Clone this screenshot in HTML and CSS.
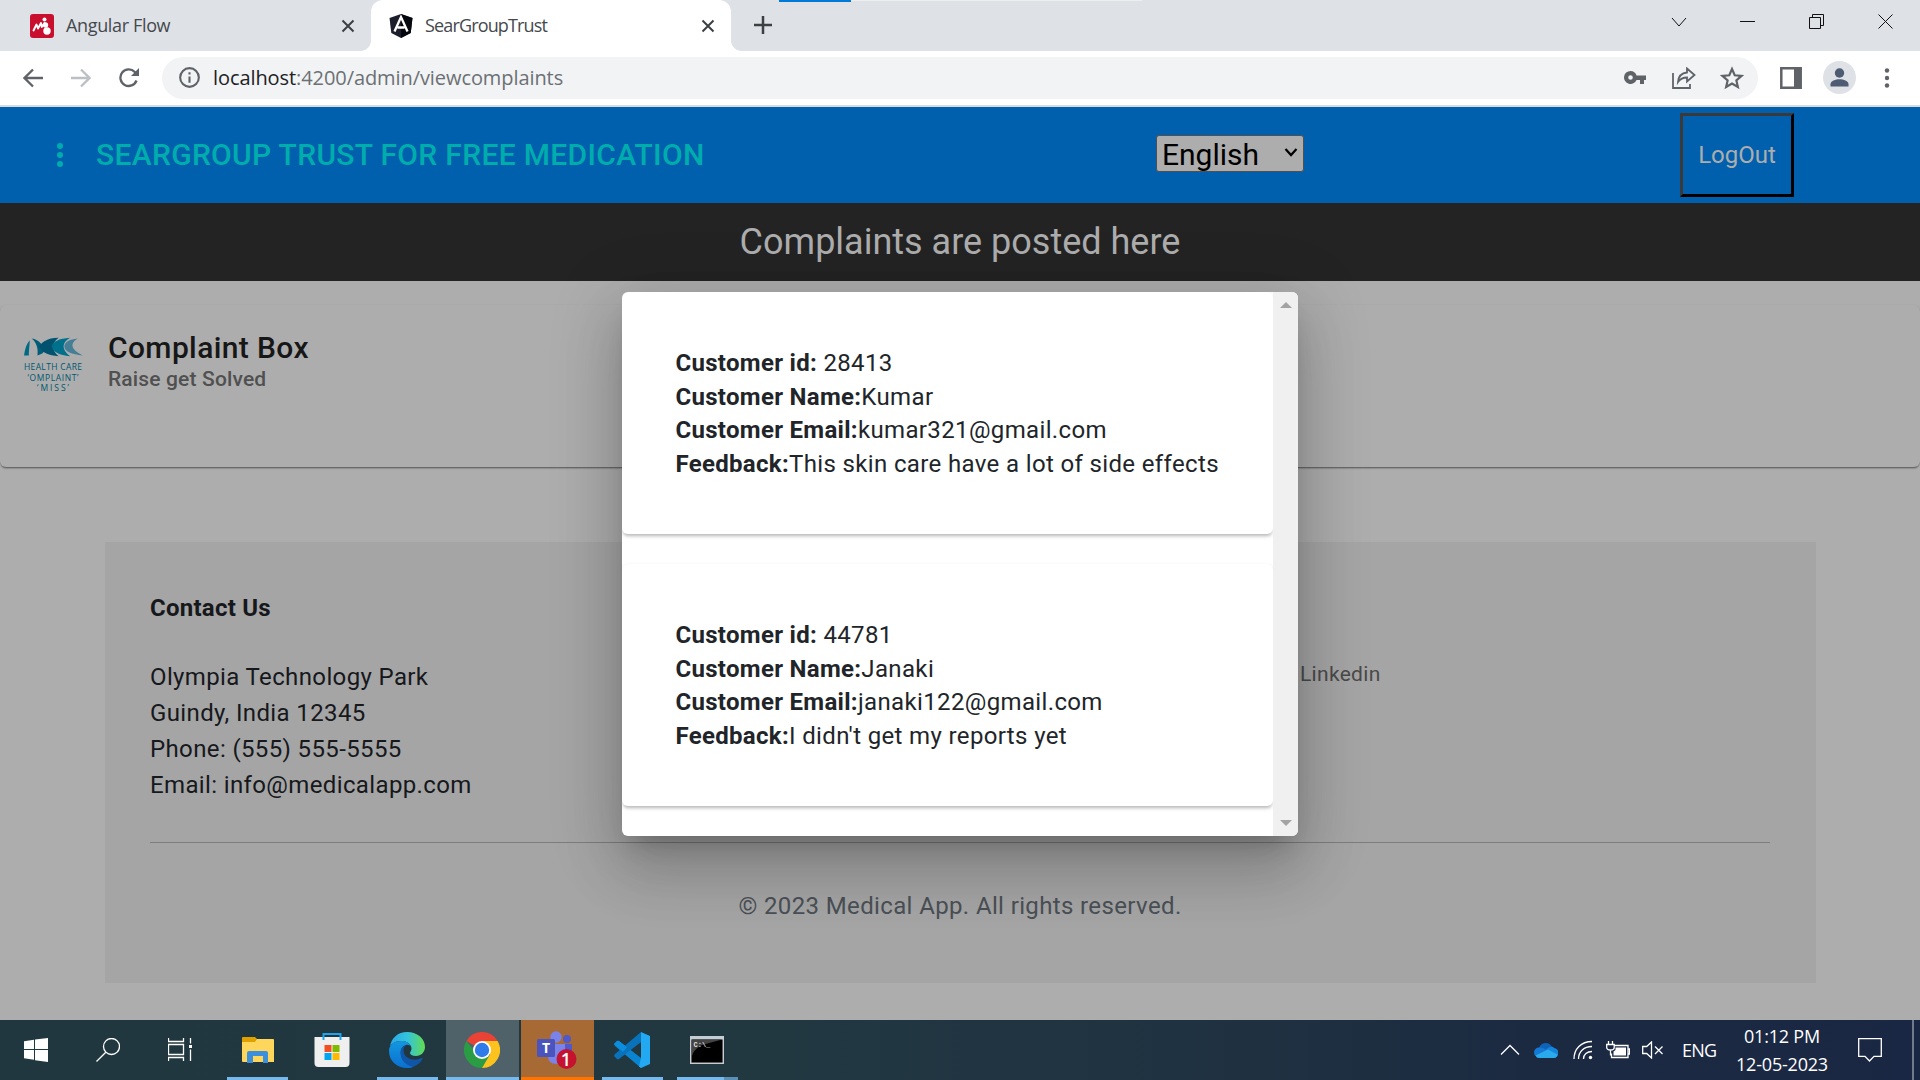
FILE: index.html
```html
<!DOCTYPE html>
<html lang="en">
<head>
<meta charset="utf-8">
<title>SearGroupTrust</title>
<link rel="stylesheet" href="styles.css">
</head>
<body>
<div class="tabs">
  <div class="tab">
    <svg class="fav" viewBox="0 0 24 24"><rect width="24" height="24" rx="3" fill="#c8102e"/><path d="M3.500 16.500l3-6 1.500 4 3-5.500.8 4 2.700-4" fill="none" stroke="#fff" stroke-width="1.900" stroke-linejoin="round" stroke-linecap="round"/><circle cx="14.500" cy="5.500" r="2" fill="#fff"/><circle cx="15.500" cy="11" r="2.700" fill="#fff"/><circle cx="17" cy="17" r="3.700" fill="#fff"/></svg>
    <span class="tab-name">Angular Flow</span>
    <svg class="x" viewBox="0 0 14 14"><path d="M1.500 1.500l11 11M12.500 1.500l-11 11"/></svg>
  </div>
  <div class="tab active">
    <svg class="fav" viewBox="0 0 24 24"><path d="M12 0l11.500 4-1.800 15L12 24l-9.700-5L.5 4z" fill="#1c1f2b"/><path d="M12 0l11.500 4-1.800 15L12 24z" fill="#05070f"/><path d="M5.500 17.500L12 3l6.500 14.500M8.500 13.500h7" fill="none" stroke="#fff" stroke-width="2.300"/></svg>
    <span class="tab-name">SearGroupTrust</span>
    <svg class="x" viewBox="0 0 14 14"><path d="M1.500 1.500l11 11M12.500 1.500l-11 11"/></svg>
  </div>
  <svg class="plus" viewBox="0 0 18 18"><path d="M9 0v18M0 9h18"/></svg>
  <div class="progress"><i></i></div>
  <div class="window-buttons">
    <svg viewBox="0 0 16 16"><path d="M1 4l7 8 7-8"/></svg>
    <svg viewBox="0 0 16 16"><path d="M0 7.500h15"/></svg>
    <svg viewBox="0 0 16 16"><path d="M.5 3.500h11v11H.5zM3.500 3.500v-3h11v11h-3"/></svg>
    <svg viewBox="0 0 16 16"><path d="M.5.5l14 14M14.500.5l-14 14"/></svg>
  </div>
</div>
<div class="toolbar">
  <svg class="nav-arrow" viewBox="0 0 20 20"><path d="M20 10H2M10 1.500L1.500 10l8.500 8.500"/></svg>
  <svg class="nav-arrow off" viewBox="0 0 20 20"><path d="M0 10h18M10 1.500l8.500 8.500-8.500 8.500"/></svg>
  <svg class="nav-arrow" viewBox="0 0 20 20"><path d="M17.500 12.500A8.300 8.300 0 1 1 15.800 4L18 6.500"/><path d="M20 0v8h-8z" class="solid"/></svg>
  <div class="omnibox">
    <svg class="info" viewBox="0 0 20 20"><circle cx="10" cy="10" r="8.900"/><path d="M10 9v6M10 5v2.200"/></svg>
    <span class="url"><b>localhost</b>:4200/admin/viewcomplaints</span>
    <svg class="key" viewBox="0 0 22 13"><path d="M6.500 0a6.500 6.500 0 1 0 6 9H16v4h4V9h2V4.500h-9.500A6.500 6.500 0 0 0 6.500 0zm0 4.200a2.300 2.300 0 1 1 0 4.600 2.300 2.300 0 0 1 0-4.600z" class="solid"/></svg>
    <svg class="share" viewBox="0 0 24 22"><path d="M1 6v15h17v-4M15 1.500l7.500 6.500-7.500 6.500v-4c-4 0-6.500 1-9 4.500.5-6 4-9 9-9.500z"/></svg>
    <svg class="star" viewBox="0 0 22 22"><path d="M11 2.800l2.500 5.700 6.200.6-4.700 4.100 1.400 6.100-5.400-3.200-5.400 3.200L7 13.200 2.300 9.100l6.200-.6z"/></svg>
  </div>
  <svg class="panel" viewBox="0 0 22 22"><path d="M1.300 1.300h19.400v19.400H1.300z"/><path d="M14 1h7v20h-7z" class="solid"/></svg>
  <svg class="avatar" viewBox="0 0 33 33"><circle cx="16.500" cy="16.500" r="16.500" fill="#dee1e6"/><circle cx="16.500" cy="12" r="4.700" fill="#4d5b73"/><path d="M7.500 25.500v-2.300c0-3.300 5-5 9-5s9 1.700 9 5v2.300z" fill="#4d5b73"/></svg>
  <svg class="dots" viewBox="0 0 6 20"><circle cx="3" cy="2.500" r="2.200"/><circle cx="3" cy="10" r="2.200"/><circle cx="3" cy="17.500" r="2.200"/></svg>
</div>

<div class="page">
  <header class="nav">
    <svg class="kebab" viewBox="0 0 6 24"><circle cx="3" cy="3" r="3"/><circle cx="3" cy="12" r="3"/><circle cx="3" cy="21" r="3"/></svg>
    <h1>SEARGROUP TRUST FOR FREE MEDICATION</h1>
    <div class="lang"><span>English</span><svg viewBox="0 0 14 9"><path d="M1.500 1l5.500 6L12.500 1"/></svg></div>
    <button class="logout">LogOut</button>
  </header>
  <div class="banner">Complaints are posted here</div>
  <section class="box">
    <svg class="logo" viewBox="0 0 60 52">
      <g transform="scale(.96 .8)">
        <path d="M0 23C1 14 3 8 6 4c0 6-1 12-1 19z" fill="#006a85"/>
        <path d="M8 2c8 1 12 10 15 14-3 4-5 6-9 7 1-9-1-16-6-21z" fill="#005d78"/>
        <path d="M36 1c-12 0-18 6-20 11 3 8 10 11 20 12-7-7-8-16 0-23z" fill="#00526f"/>
        <path d="M48 1c-12 1-18 5-19 11 1 7 8 11 19 12-9-8-9-17 0-23z" fill="#00718c"/>
        <path d="M56 2c-9 1-14 5-14 10 0 6 8 10 19 11-13-8-13-15-5-21z" fill="#467e96"/>
      </g>
      <text x="29" y="33" textLength="58">HEALTH CARE</text><text x="29" y="43.500" textLength="51">‘OMPLAINT’</text><text x="29" y="53.500" textLength="32">‘MISS’</text>
    </svg>
    <div><h2>Complaint Box</h2><p>Raise get Solved</p></div>
  </section>
  <footer class="foot">
    <div class="cols">
      <div class="contact">
        <h3>Contact Us</h3>
        <address>Olympia Technology Park<br>Guindy, India 12345<br>Phone: (555) 555-5555<br>Email: info@medicalapp.com</address>
      </div>
      <div class="social">Linkedin</div>
    </div>
    <p class="copy">© 2023 Medical App. All rights reserved.</p>
  </footer>
  <div class="dialog">
    <div class="list">
      <article class="item">
        <div><b>Customer id:</b> 28413</div>
        <div><b>Customer Name:</b>Kumar</div>
        <div><b>Customer Email:</b>kumar321@gmail.com</div>
        <div><b>Feedback:</b>This skin care have a lot of side effects</div>
      </article>
      <article class="item">
        <div><b>Customer id:</b> 44781</div>
        <div><b>Customer Name:</b>Janaki</div>
        <div><b>Customer Email:</b>janaki122@gmail.com</div>
        <div><b>Feedback:</b>I didn't get my reports yet</div>
      </article>
    </div>
    <div class="scroll">
      <svg viewBox="0 0 12 6"><path d="M0 6l6-6 6 6z"/></svg>
      <svg viewBox="0 0 12 6"><path d="M0 0l6 6 6-6z"/></svg>
    </div>
  </div>
</div>

<div class="taskbar">
  <div class="sys"><svg width="24" height="24" viewBox="0 0 24 24"><path d="M0 3.300L10 1.800V11H0zM11 1.600L24 0v11H11zM0 12h10v9.700L0 20.300zM11 12h13v12l-13-1.800z" fill="#fff"/></svg></div>
  <div class="sys"><svg width="24" height="24" viewBox="0 0 24 24" class="line"><circle cx="15.500" cy="8.500" r="8"/><path d="M9.800 14.200L.5 23.500"/></svg></div>
  <div class="sys"><svg width="24" height="24" viewBox="0 0 24 24" class="line"><path d="M.5 0v3.500h15V0M.5 6.500h15v10H.5zM.5 23v-3.500h15V23M22.500 0v5.500M22.500 11.500V23"/><path d="M21 7h3v3h-3z" fill="#fff" stroke="none"/></svg></div>
  <div class="app first open"><svg width="32" height="26" viewBox="0 0 32 26"><path d="M0 1q0-1 1-1h12l2 2v8H0z" fill="#dfa000"/><path d="M0 5h13l2-3h16q1 0 1 1v22H1q-1 0-1-1z" fill="#ffd65c"/><path d="M5 26V16q0-2 2-2h17q2 0 2 2v10h-5v-7H11v7z" fill="#3b8fdc"/></svg></div>
  <div class="app"><svg width="36" height="36" viewBox="0 0 36 36"><path d="M9.500 8V2h17v6" fill="none" stroke="#1fa3ee" stroke-width="2"/><path d="M.5 5h35v26q0 4-4 4h-27q-4 0-4-4z" fill="#efefef"/><path d="M9.500 5v3M26.500 5v3" stroke="#1fa3ee" stroke-width="2"/><path d="M10.500 13h7v7h-7z" fill="#f25022"/><path d="M18.500 13h7v7h-7z" fill="#7fba00"/><path d="M10.500 21h7v7h-7z" fill="#00a4ef"/><path d="M18.500 21h7v7h-7z" fill="#ffb900"/></svg></div>
  <div class="app open"><svg width="36" height="36" viewBox="0 0 36 36"><defs><linearGradient id="e1"><stop stop-color="#2aa7e8"/><stop offset=".5" stop-color="#33c3dd"/><stop offset="1" stop-color="#62dc50"/></linearGradient><linearGradient id="e2" x2="0" y2="1"><stop stop-color="#1497e0"/><stop offset="1" stop-color="#0a70d0"/></linearGradient></defs><path d="M1 15C2 6 9 0 18 0c11 0 18 7 18 15 0 5-4 9-9 9-4 0-6-1.500-6-3 0-1 1.500-2 1.500-4.500C22.500 12 18 9 12 9 6 9 2 12 1 15z" fill="url(#e1)"/><path d="M12 9C5 9 0 13 0 19c0 10 8 17 18 17 3 0 5-.5 7-1.500-6-.5-12-5-13-12-1-6 2-8.500 5-9.500 2-.6 4 .5 5 1.500C21 11 17 9 12 9z" fill="url(#e2)"/><path d="M17 13c-3 1-6 4-5.500 9 .8 8 7 12 13.500 12.500 4-1.500 7-4.500 8.500-7.500.4-.9-.3-1.300-1-.9C24 30 15 26 14.500 19c-.2-2.500 1-4.800 2.500-6z" fill="#1056a8"/></svg></div>
  <div class="app open wide current"><svg width="36" height="36" viewBox="0 0 36 36"><path d="M18 18L2.400 9A18 18 0 0 1 33.600 9z" fill="#ea4335"/><path d="M18 18h-8L2.400 9A18 18 0 0 0 18 36l8-13z" fill="#2a9c43"/><path d="M18 9h15.600A18 18 0 0 1 18 36l8-13.500z" fill="#fcc31e"/><circle cx="18" cy="18" r="9" fill="#fff"/><circle cx="18" cy="18" r="7.200" fill="#2f7bea"/></svg></div>
  <div class="app open wide alert"><svg width="40" height="38" viewBox="0 0 40 38"><circle cx="19" cy="6" r="5.700" fill="#7b83eb"/><circle cx="30" cy="8" r="4" fill="#5059c9"/><path d="M25 13h10v11q0 4-5 5h-5z" fill="#5059c9"/><path d="M12 13h16v13q0 7-8 7-9 0-9-8z" fill="#7b83eb"/><rect y="8" width="18" height="18" rx="1.500" fill="#4b53bc"/><text x="9" y="22" class="tee">T</text><circle cx="29.500" cy="28" r="10" fill="#c4122f"/><text x="29" y="34.500" class="one">1</text></svg></div>
  <div class="app open"><svg width="36" height="36" viewBox="0 0 36 36"><path d="M0 12l3-3q1-.7 2 0l22 17v10L1 14z" fill="#0a84d0"/><path d="M0 24l3 3q1 .7 2 0l22-17V0L1 22z" fill="#0873bb"/><path d="M0 12l3-3q1-.7 2 0l8 6.300-4 4.700z" fill="#0b8ee0"/><path d="M27 0l9 4v28l-9 4-2-1.500 2-8.500V10z" fill="#23a8f2"/></svg></div>
  <div class="app open multi"><svg width="34" height="28" viewBox="0 0 34 28"><rect x=".7" y=".7" width="32.600" height="26.600" fill="#000" stroke="#c9cccf" stroke-width="1.500"/><path d="M1 1h32v2.500H1z" fill="#c3cfd8"/><path d="M2 3.500h30L12 9Q3 14 2 20z" fill="#444"/><text x="3.500" y="11" class="cmd">C:\_</text></svg></div>
  <div class="tray">
    <svg class="line up" width="20" height="12" viewBox="0 0 20 12"><path d="M1 10.500l9-9 9 9"/></svg>
    <svg class="cloud" width="24" height="16" viewBox="0 0 24 16"><path d="M5 6a7 7 0 0 1 13-1l-5 5z" fill="#0f62b5"/><path d="M5 15.500A5 5 0 0 1 5 5.500c3-.5 5 .5 8 3z" fill="#1478d4"/><path d="M13 7c2-2.500 6-3 7-1a5 5 0 0 1-1 10l-9-7z" fill="#1584dd"/><path d="M1.500 13.500L14 7.500l9.500 5q-1 3.500-4 3.500H5q-2.500 0-3.500-2.500z" fill="#2aa9ec"/></svg>
    <svg class="line wifi" width="20" height="20" viewBox="0 0 20 20"><path d="M1 19C1 9 8 1.500 19 1.500M5.500 19C5.500 11.500 11 6.500 19 6.500M10.500 19c0-4.500 3.500-7.500 8.500-7.500"/><circle cx="17.500" cy="17.500" r="1.700" fill="#fff" stroke="none"/></svg>
    <svg class="line batt" width="24" height="18" viewBox="0 0 24 18"><path d="M8.500 4.500h13.500v12H5.500v-4M22 8h1.500v5H22M2.500 0v3M6.500 0v3M.7 3.500h7.500v3q0 2.500-3.700 2.500T.7 6.500zM4.500 9v5.500"/><path d="M9.500 6.500h10.500v8H7.500v-4L9.500 9z" fill="#fff" stroke="none"/></svg>
    <svg class="line snd" width="22" height="18" viewBox="0 0 22 18"><path d="M.7 5.500h4L9.500 1v16l-4.800-4.500h-4zM13 5.500l7.500 7.500M20.500 5.500L13 13"/></svg>
    <span class="eng">ENG</span>
    <div class="clock">01:12 PM<br>12-05-2023</div>
    <svg class="line note" width="24" height="24" viewBox="0 0 24 24"><path d="M.7.7h22.600v17.600H16L11.500 23 7 18.300H.7z"/></svg>
  </div>
</div>
</body>
</html>
```
FILE: styles.css
```css
* { box-sizing: border-box; }
body { margin: 0; width: 1920px; height: 1080px; overflow: hidden; display: flex; flex-direction: column; font-family: Roboto, sans-serif; background: #adadad; }
svg { display: block; flex: none; }
h1, h2, h3, p { margin: 0; }

.tabs { position: relative; height: 51px; display: flex; background: #dee1e6; }
.tab { display: flex; align-items: center; width: 371px; padding: 0 16px 0 30px; font: 18px "Open Sans", sans-serif; color: #45494d; }
.tab.active { position: relative; width: 360px; padding-left: 18px; background: #fff; border-radius: 12px 12px 0 0; }
.tab.active::before, .tab.active::after { content: ""; position: absolute; bottom: 0; width: 10px; height: 10px; }
.tab.active::before { left: -10px; background: radial-gradient(circle at 0 0, #dee1e6 9.500px, #fff 10px); }
.tab.active::after { right: -10px; background: radial-gradient(circle at 100% 0, #dee1e6 9.500px, #fff 10px); }
.fav { width: 24px; height: 24px; margin-right: 12px; }
.tab-name { flex: 1; padding-bottom: 2px; letter-spacing: -.4px; }
.tab.active .tab-name { letter-spacing: -.85px; }
.tab:first-child .tab-name { letter-spacing: -.35px; }
.x { width: 14px; height: 14px; stroke: #3c4043; stroke-width: 2; }
.plus { width: 18px; height: 18px; margin: 16px 0 0 23px; stroke: #3c4043; stroke-width: 2.500; }
.progress { position: absolute; left: 779px; top: 0; width: 363px; height: 1px; background: #eceef0; }
.progress i { display: block; width: 72px; height: 2px; background: #0078d7; }
.window-buttons { display: flex; gap: 53px; margin: 14px 26px 0 auto; }
.window-buttons svg { width: 16px; height: 16px; fill: none; stroke: #111; stroke-width: 1; }

.toolbar { height: 56px; display: flex; align-items: center; padding: 0 30px 1px 23px; background: #fff; border-bottom: 2px solid #d9dadc; }
.nav-arrow { width: 20px; height: 20px; margin-right: 28px; fill: none; stroke: #5f6368; stroke-width: 2.300; }
.nav-arrow:nth-child(3) { margin-right: 23px; }
.nav-arrow.off { stroke: #bdc0c3; }
.toolbar .solid { fill: #5f6368; stroke: none; }
.omnibox { flex: 1; height: 42px; display: flex; align-items: center; padding: 0 14px 0 17px; border-radius: 21px; background: #f1f3f4; }
.info { width: 21px; height: 21px; margin-right: 13px; fill: none; stroke: #5f6368; stroke-width: 2; }
.url { flex: 1; font: 20px "Open Sans", sans-serif; letter-spacing: -.08px; color: #6c7074; }
.url b { font-weight: 400; color: #202124; }
.key { width: 22px; height: 13px; }
.share { width: 24px; height: 22px; margin-left: 26px; fill: none; stroke: #5f6368; stroke-width: 1.800; }
.star { width: 24px; height: 24px; margin-left: 24px; fill: none; stroke: #5f6368; stroke-width: 2; }
.panel { width: 22px; height: 22px; margin: 0 21px 0 22px; fill: none; stroke: #5f6368; stroke-width: 2.500; }
.avatar { width: 33px; height: 33px; }
.dots { width: 6px; height: 20px; margin-left: 28px; fill: #5f6368; }

.page { position: relative; height: 913px; overflow: hidden; background: #adadad; }
.nav { height: 96px; display: flex; align-items: center; padding: 0 126px 0 57px; background: #0060ad; }
.kebab { width: 6px; height: 24px; margin-right: 33px; fill: #00adad; }
.nav h1 { width: 1060px; font-size: 30px; font-weight: 500; line-height: 40px; letter-spacing: .32px; color: #00adad; white-space: nowrap; }
.lang { width: 148px; height: 37px; margin-top: -4px; display: flex; align-items: center; justify-content: space-between; padding: 3px 5px 0; background: #adadad; border: 1px solid #505050; border-radius: 3px; font-size: 30px; color: #000; }
.lang svg { width: 14px; height: 9px; margin-top: -4px; fill: none; stroke: #000; stroke-width: 2.200; }
.logout { width: 114px; height: 84px; margin-left: auto; padding: 0; border: 3px solid; border-color: #3a3a3a #000 #000 #3a3a3a; background: none; color: #adadad; font: 24px Roboto, sans-serif; }
.banner { height: 78px; padding-top: 1px; background: #232323; color: #adadad; text-align: center; font-size: 36px; line-height: 76px; }
.box { height: 162px; margin-top: 24px; display: flex; gap: 24px; padding: 27px 24px; border-radius: 6px; box-shadow: 0 3px 2px -2px rgba(0,0,0,.3), 0 1px 2px rgba(0,0,0,.3); }
.logo { width: 60px; height: 54px; margin-top: 4px; overflow: visible; }
.logo text { font: 8.500px "Open Sans", sans-serif; text-anchor: middle; fill: #005670; }
.box h2 { font-size: 30px; font-weight: 500; line-height: 32px; letter-spacing: .38px; color: #171717; }
.box p { font-size: 21px; font-weight: 500; line-height: 30px; letter-spacing: .15px; color: #505050; }
.foot { height: 441px; margin: 75px 104px 0 105px; padding: 46px 46px 46px 45px; background: #a5a5a5; font-size: 24px; color: #16181c; }
.cols { display: flex; height: 255px; border-bottom: 1px solid #7d7d7d; }
.contact { width: 1150px; }
.foot h3 { margin-top: 2px; font-size: 24px; font-weight: 700; line-height: 36px; letter-spacing: .25px; }
.foot address { margin-top: 33px; font-style: normal; line-height: 36px; letter-spacing: .37px; }
.social { margin-top: 70px; font-size: 21px; line-height: 32px; letter-spacing: .3px; color: #4a4a4a; }
.copy { margin-top: 45px; text-align: center; line-height: 36px; letter-spacing: .37px; color: #4a5056; }

.dialog { position: absolute; left: 622px; top: 185px; width: 676px; height: 544px; display: flex; overflow: hidden; background: #fff; border-radius: 6px; }
.dialog { box-shadow: 0 16px 22px -10px rgba(0,0,0,.2), 0 36px 57px 4px rgba(0,0,0,.14), 0 13px 69px 12px rgba(0,0,0,.12); }
.list { width: 651px; display: flex; flex-direction: column; gap: 30px; }
.item { height: 242px; padding: 55px 0 0 53.500px; border-radius: 6px; box-shadow: 0 4px 3px -2px rgba(0,0,0,.14), 0 2px 4px rgba(0,0,0,.16); font-size: 24px; line-height: 33.600px; letter-spacing: .36px; color: #212529; white-space: nowrap; }
.item b { letter-spacing: .3px; }
.scroll { width: 25px; padding: 10px 0; display: flex; flex-direction: column; justify-content: space-between; align-items: center; background: #f0f0f0; }
.scroll svg { width: 12px; height: 6px; fill: #a3a3a3; }

.taskbar { height: 60px; display: flex; background: linear-gradient(90deg, #213740 0%, #213841 40%, #1f3141 65%, #1b2a41 80%, #1a2744 100%); }
.sys, .app { width: 72px; display: grid; place-items: center; }
.app { position: relative; width: 73px; margin-right: 2px; padding-right: 2px; }
.app.first { margin-left: 5px; padding-right: 0; }
.app.open::after { content: ""; position: absolute; left: 6px; right: 6px; bottom: 0; height: 3px; background: #76b9ed; }
.app.open.wide::after { left: 0; right: 0; }
.current { background: #4f626a; }
.alert { background: #a76a35; }
.alert.open::after { background: #ff7400; }
.app.multi::after { background: linear-gradient(90deg, #76b9ed 47px, #5c8fb5 47px); }
.line { fill: none; stroke: #fff; stroke-width: 1.300; }
.tee { font: 700 14px "Open Sans", sans-serif; text-anchor: middle; fill: #fff; }
.one { font: 600 18px "Open Sans", sans-serif; text-anchor: middle; fill: #fff; }
.cmd { font: 700 7px "Liberation Mono", monospace; fill: #ddd; }
.tray { margin-left: auto; display: flex; align-items: center; padding-right: 30px; border-right: 2px solid #6f7a8c; margin-right: 6px; color: #fff; font: 18px "Open Sans", sans-serif; }
.cloud { margin-left: 14px; }
.wifi { margin-left: 15px; }
.batt { margin-left: 13px; }
.snd { margin-left: 12px; }
.eng { width: 34px; margin-left: 18px; letter-spacing: -.8px; }
.clock { width: 134px; padding-right: 2px; text-align: center; line-height: 28px; letter-spacing: -.2px; }
.note { margin-left: 8px; }
```
